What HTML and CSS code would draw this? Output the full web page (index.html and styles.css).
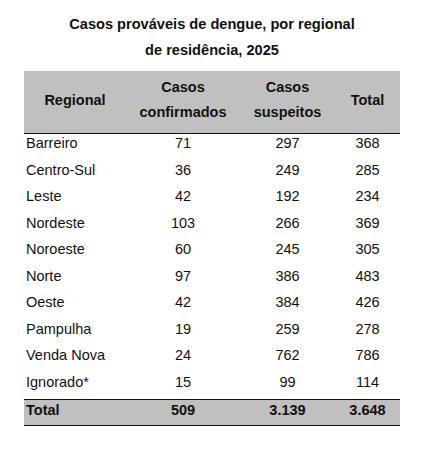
FILE: index.html
```html
<!DOCTYPE html>
<html lang="pt-BR">
<head>
<meta charset="utf-8">
<title>Casos prováveis de dengue</title>
<link rel="stylesheet" href="styles.css">
</head>
<body>
<div class="page">
  <h1 class="title">Casos prováveis de dengue, por regional<br>de residência, 2025</h1>
  <table class="data">
    <colgroup>
      <col class="c1"><col class="c2"><col class="c3"><col class="c4">
    </colgroup>
    <thead>
      <tr>
        <th>Regional</th>
        <th>Casos<br>confirmados</th>
        <th>Casos<br>suspeitos</th>
        <th>Total</th>
      </tr>
    </thead>
    <tbody>
      <tr><td>Barreiro</td><td>71</td><td>297</td><td>368</td></tr>
      <tr><td>Centro-Sul</td><td>36</td><td>249</td><td>285</td></tr>
      <tr><td>Leste</td><td>42</td><td>192</td><td>234</td></tr>
      <tr><td>Nordeste</td><td>103</td><td>266</td><td>369</td></tr>
      <tr><td>Noroeste</td><td>60</td><td>245</td><td>305</td></tr>
      <tr><td>Norte</td><td>97</td><td>386</td><td>483</td></tr>
      <tr><td>Oeste</td><td>42</td><td>384</td><td>426</td></tr>
      <tr><td>Pampulha</td><td>19</td><td>259</td><td>278</td></tr>
      <tr><td>Venda Nova</td><td>24</td><td>762</td><td>786</td></tr>
      <tr><td>Ignorado*</td><td>15</td><td>99</td><td>114</td></tr>
    </tbody>
    <tfoot>
      <tr><td>Total</td><td>509</td><td>3.139</td><td>3.648</td></tr>
    </tfoot>
  </table>
</div>
</body>
</html>
```

FILE: styles.css
```css
html, body {
  margin: 0;
  padding: 0;
  background: #ffffff;
}

body {
  font-family: "Liberation Sans", Arial, sans-serif;
  color: #111111;
}

.page {
  width: 424px;
  padding-top: 11px;
}

.title {
  margin: 0 0 8px 0;
  font-size: 14.6px;
  line-height: 26px;
  font-weight: bold;
  text-align: center;
  color: #111111;
}

.data {
  margin: 0 24px;
  width: 376px;
  border-collapse: collapse;
  table-layout: fixed;
  font-size: 14.5px;
}

.c1 { width: 102px; }
.c2 { width: 114px; }
.c3 { width: 95px; }
.c4 { width: 65px; }

.data th {
  background: #c0c0c0;
  font-weight: bold;
  line-height: 25px;
  padding: 4px 0 8px 0;
  text-align: center;
  vertical-align: middle;
  border-bottom: 1.5px solid #111111;
}

.data td {
  line-height: 18px;
  padding: 0 0 8.5px 0;
  text-align: center;
}

.data td:first-child {
  text-align: left;
  padding-left: 2px;
}

.data tfoot td {
  background: #c0c0c0;
  font-weight: bold;
  padding-top: 1px;
  padding-bottom: 6px;
  border-top: 1.5px solid #111111;
  border-bottom: 1.5px solid #111111;
}
```
